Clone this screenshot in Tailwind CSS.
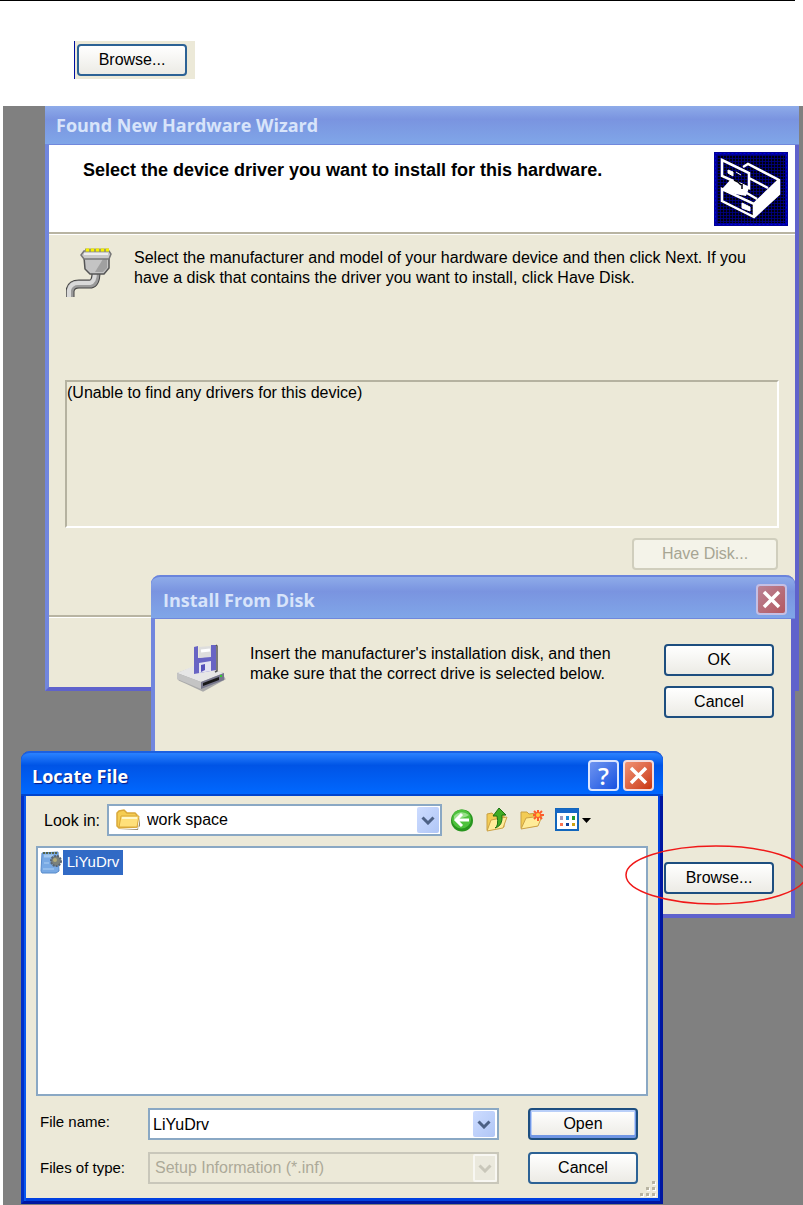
<!DOCTYPE html>
<html lang="en">
<head>
<meta charset="utf-8">
<meta name="viewport" content="width=device-width, initial-scale=1">
<title>Locate File</title>
<script src="https://cdn.jsdelivr.net/npm/@tailwindcss/browser@4"></script>
</head>
<body class="flex min-h-screen flex-col bg-white font-['Liberation_Sans',Arial,sans-serif] text-[16px] leading-5 text-black">

<div class="mr-2 h-px bg-black"></div>

<div class="mt-10 ml-[74px] flex h-[38px] w-[121px] items-center border-l border-[#0010a0] bg-[#ece9d8] pl-0.5">
  <button class="h-8 w-[110px] rounded-[4px] border-2 border-[#2c6295] bg-linear-to-b from-white to-[#ecebe5]">Browse...</button>
</div>

<main class="relative mt-[27px] ml-[3px] min-h-[1099px] grow overflow-hidden bg-[#808080]">

  <!-- Found New Hardware Wizard -->
  <section class="absolute top-0 right-1 left-[42px] flex h-[585px] flex-col border-x-4 border-b-4 border-r-[#5f62cc] border-b-[#5f62cc] border-l-[#7186de] bg-[#ece9d8]">
    <header class="-mx-1 flex h-[39px] items-center border-b border-[#7088dc] bg-linear-to-b from-[#8eabe9] via-[#7a94e0] via-35% to-[#80a6e8] pl-[11px]">
      <h2 class="font-['Open_Sans',sans-serif] text-[18px] leading-6 font-bold text-[#d8e4fa]">Found New Hardware Wizard</h2>
    </header>
    <div class="flex h-[87px] items-start justify-between bg-white pt-[7px] pr-[7px] pl-[34px]">
      <h3 class="pt-2 text-[18px] leading-5 font-bold">Select the device driver you want to install for this hardware.</h3>
      <svg class="h-[74px] w-[74px] shrink-0" viewBox="0 0 74 74">
        <defs><pattern id="mesh" width="3" height="3" patternUnits="userSpaceOnUse"><rect width="3" height="3" fill="#00000c"/><path d="M0 .5H3M.5 0V3" stroke="#000088" stroke-width=".8"/></pattern></defs>
        <rect width="74" height="74" fill="#000098"/>
        <rect x="3" y="3" width="68" height="68" fill="url(#mesh)"/>
        <rect x="1.500" y="1.500" width="71" height="71" fill="none" stroke="#0000e0" stroke-dasharray="2 2"/>
        <path d="M8 37L17 27L27 31L35 36L32 44L21 42L12 39Z" fill="#fff"/>
        <path d="M40 64L40 51L65 27V42Z" fill="#fff"/>
        <path d="M8 8L35 21V36L8 24ZM29 15L34 12L65 28V42L40 65L8 49V37L40 52L65 28M35 26L54 36M40 52V65M31 40L43 47" fill="none" stroke="#fff" stroke-width="2.500"/>
        <path d="M14 18L19 20V24L14 21ZM22 20L27 23M28 51L36 55V59L28 56Z" fill="#fff" stroke="#fff" stroke-width="1"/>
        <path d="M20 28L24 30L27 33M28 32V37" stroke="#00000c" stroke-width="1.500" fill="none"/>
      </svg>
    </div>
    <div class="h-[3px] border-t-2 border-b border-t-[#b8b4a2] border-b-white"></div>
    <div class="flex gap-5 px-[17px] pt-[13px]">
      <svg class="h-[50px] w-[48px] shrink-0" viewBox="0 0 48 50">
        <path d="M4 49V43Q5 36 13 36H25Q30 35 30 24" fill="none" stroke="#444" stroke-width="9"/>
        <path d="M4 49V43Q5 36 12 36H25Q30 35 30 24" fill="none" stroke="#9a9a9a" stroke-width="7"/>
        <path d="M3 49V42Q5 35 12 35H24Q29 34 29 24" fill="none" stroke="#d9d9d9" stroke-width="4"/>
        <path d="M18 9H43V20L38 26H24L19 21Z" fill="#c4c4c4" stroke="#555" stroke-width="1.500"/>
        <path d="M37 11H41V20L37 24H29Z" fill="#a0a0a0"/>
        <path d="M18 3H43L45 6L43 11H18L15 7Z" fill="#c9c9c9" stroke="#777" stroke-width="1.500"/>
        <path d="M18 6H42" stroke="#eee" stroke-width="2"/>
        <path d="M19 2H43" stroke="#a5a35a" stroke-width="3"/>
        <path d="M20 2H43" stroke="#f4f000" stroke-width="3" stroke-dasharray="3 2"/>
      </svg>
      <p>Select the manufacturer and model of your hardware device and then click Next. If you<br>have a disk that contains the driver you want to install, click Have Disk.</p>
    </div>
    <div class="mx-[16px] mt-[82px] h-[148px] border-2 border-t-[#b5b2a0] border-r-white border-b-white border-l-[#b5b2a0] pt-px">(Unable to find any drivers for this device)</div>
    <div class="flex justify-end pt-2.5 pr-[17px]">
      <button disabled class="h-8 w-[146px] rounded-[4px] border-2 border-[#d0cebd] bg-[#f4f3e9] text-[#a7a593]">Have Disk...</button>
    </div>
    <div class="mt-[45px] h-[3px] border-t-2 border-b border-t-[#b8b4a2] border-b-white"></div>
  </section>

  <!-- Install From Disk -->
  <section class="absolute top-[469px] right-2 left-[148px] flex h-[343px] flex-col rounded-t-[9px] border-x-4 border-b-4 border-r-[#5f62cc] border-b-[#5f62cc] border-l-[#7186de] bg-[#ece9d8]">
    <header class="-mx-1 flex h-[44px] items-center justify-between rounded-t-[9px] border-t-2 border-b border-t-[#6a84dc] border-b-[#7088dc] bg-linear-to-b from-[#8eabe9] via-[#7a94e0] via-35% to-[#80a6e8] pt-1 pr-2 pl-3">
      <h2 class="font-['Open_Sans',sans-serif] text-[18px] leading-6 font-bold text-[#d8e4fa]">Install From Disk</h2>
      <button aria-label="Close Install From Disk" class="flex size-[31px] items-center justify-center rounded-[4px] border-2 border-[#c4bfe4] bg-linear-to-br from-[#b98397] to-[#b45860]">
        <svg class="size-[19px]" viewBox="0 0 19 19"><path d="M2 2L17 17M17 2L2 17" stroke="#fff" stroke-width="3.500"/></svg>
      </button>
    </header>
    <div class="flex pt-[25px] pr-[17px] pl-[21px]">
      <svg class="h-[48px] w-[50px] shrink-0" viewBox="0 0 50 48">
        <path d="M3 35L27 46L49 34L26 45Z" fill="#777" stroke="#aaa" stroke-width="3"/>
        <path d="M1 29L20 22L48 29V36L25 45L1 35Z" fill="#aaa"/>
        <path d="M1 29L20 21L48 29L25 38Z" fill="#e6e6e6"/>
        <path d="M1 29L25 38V45L1 35Z" fill="#c4c4c4"/>
        <path d="M25 38L48 29V36L25 45Z" fill="#77778c"/>
        <path d="M27 39L43 33V36L27 42Z" fill="#181818"/><path d="M44 32H46" stroke="#3c3" stroke-width="2"/>
        <path d="M18 3L22 2V14L35 12V1L40 1V26L18 30Z" fill="#6864c4"/>
        <path d="M23 3L35 2V13L23 14Z" fill="#ddd"/><path d="M25 7L34 6" stroke="#fff" stroke-width="3"/>
        <path d="M23 19L35 17V27L23 29Z" fill="#e4e3f1"/><path d="M25 21L29 20V26L25 28Z" fill="#5550ba"/>
        <path d="M40 1L41 2V27L39 28" fill="none" stroke="#555" stroke-width="1.500"/>
      </svg>
      <p class="ml-[24px] grow whitespace-nowrap">Insert the manufacturer's installation disk, and then<br>make sure that the correct drive is selected below.</p>
      <div class="flex w-[110px] shrink-0 flex-col gap-2.5">
        <button class="h-8 rounded-[4px] border-2 border-[#1d4e7f] bg-linear-to-b from-white to-[#ecebe5]">OK</button>
        <button class="h-8 rounded-[4px] border-2 border-[#1d4e7f] bg-linear-to-b from-white to-[#ecebe5]">Cancel</button>
        <button class="mt-[134px] h-8 rounded-[4px] border-2 border-[#1d4e7f] bg-linear-to-b from-white to-[#ecebe5]">Browse...</button>
      </div>
    </div>
  </section>

  <!-- Locate File -->
  <section class="absolute top-[645px] right-[140px] left-[18px] flex h-[453px] flex-col rounded-t-[9px] border-x-[3px] border-b-[3px] border-r-[#0016a0] border-b-[#0016a0] border-l-[#0030c8] bg-[#ece9d8] px-0.5 pb-[3px] shadow-[inset_2px_0_0_#0858ee,inset_-2px_0_0_#0040e0,inset_0_-3px_0_#0040e0]">
    <header class="-mx-[5px] flex h-[45px] shrink-0 items-center justify-between rounded-t-[9px] border-t-2 border-b-2 border-t-[#1c60e0] border-b-[#0044cc] bg-linear-to-b from-[#2a82ff] via-[#0054e6] via-30% to-[#0068ff] pt-1 pr-[9px] pl-[11px]">
      <h2 class="font-['Open_Sans',sans-serif] text-[18px] leading-6 font-bold text-white [text-shadow:1px_1px_1px_#0a1883]">Locate File</h2>
      <div class="flex gap-1">
        <button aria-label="Help" class="flex size-[31px] items-center justify-center rounded-[4px] border-2 border-[#dce6ff] bg-linear-to-br from-[#6f94f0] to-[#1650e0] font-['Open_Sans',sans-serif] text-[24px] leading-7 font-semibold text-white">?</button>
        <button aria-label="Close Locate File" class="flex size-[31px] items-center justify-center rounded-[4px] border-2 border-[#f4dcdc] bg-linear-to-br from-[#f09274] to-[#c83408]">
          <svg class="size-[19px]" viewBox="0 0 19 19"><path d="M2 2L17 17M17 2L2 17" stroke="#fff" stroke-width="3.500"/></svg>
        </button>
      </div>
    </header>

    <div class="flex items-center pt-2 pl-[18px]">
      <label for="lookin" class="w-[63px] pt-0.5">Look in:</label>
      <div class="relative h-8 w-[335px]">
        <select id="lookin" class="h-8 w-full appearance-none border-2 border-[#8aa8c4] bg-white pl-[38px]"><option>work space</option></select>
        <svg class="pointer-events-none absolute top-[5px] left-[9px] h-[22px] w-[25px]" viewBox="0 0 25 22">
          <path d="M3 20H21L24 17V8L22 21Z" fill="#97886a"/>
          <path d="M1 17V4L3 2L8 1L11 4H19L21 6V18L3 19Z" fill="#f5cd52" stroke="#d9a83a" stroke-width="1.500"/>
          <path d="M3 18L5 7H23L21 18Z" fill="#ffe07a" stroke="#d9a83a"/>
          <path d="M6 9H21" stroke="#fff8cb" stroke-width="2"/>
        </svg>
        <span class="pointer-events-none absolute top-[3px] right-[3px] flex h-[26px] w-[22px] items-center justify-center rounded-[2px] bg-linear-to-br from-[#cddcff] to-[#b0c6f6]">
          <svg class="h-[9px] w-[14px]" viewBox="0 0 14 9"><path d="M1.500 1.500L7 7L12.500 1.500" fill="none" stroke="#4d6185" stroke-width="3"/></svg>
        </span>
      </div>
      <div class="ml-2 flex items-center gap-[11px]">
        <button aria-label="Back"><svg class="size-6" viewBox="0 0 24 24">
          <circle cx="12" cy="12.500" r="11" fill="#28951e"/><circle cx="11.500" cy="11" r="9.500" fill="#4fc23d"/><path d="M4 8Q11 1 19 7Q15 10 4 11Z" fill="#9ae08c"/>
          <path d="M19 12H7M12 6L6 12L12 18" fill="none" stroke="#fff" stroke-width="3"/></svg></button>
        <button aria-label="Up One Level"><svg class="size-6" viewBox="0 0 24 24">
          <path d="M2 22V6L7 5L9 7L19 5V19Z" fill="#f3cc55" stroke="#caa040"/><path d="M2 23L6 12L22 9L18 20Z" fill="#ffec99" stroke="#cca246"/>
          <path d="M10 20Q14 18 12 8H8L14 0L21 7H17Q18 18 10 20Z" fill="#40ac24" stroke="#1a7112"/></svg></button>
        <button aria-label="Create New Folder"><svg class="size-6" viewBox="0 0 24 24">
          <path d="M1 20V4L7 4L9 6L17 5V18Z" fill="#f3cc55" stroke="#caa040"/><path d="M1 21L6 10L22 8L18 18Z" fill="#ffec99" stroke="#cca246"/>
          <path d="M18 2V13M13 7H24M14 3L22 11M22 3L14 11" stroke="#fd5b2b" stroke-width="2"/><circle cx="18" cy="7" r="2" fill="#ffc93e"/></svg></button>
        <button aria-label="View Menu" class="flex items-center gap-[3px]"><svg class="size-6" viewBox="0 0 24 24">
          <rect x="1" y="1" width="22" height="21" fill="#fff" stroke="#1266bc" stroke-width="2"/><path d="M1 1H23V5H1Z" fill="#1768c6"/>
          <path d="M5 8H8V12H5Z" fill="#a39abd"/><path d="M11 8H14V12H11Z" fill="#188bd8"/><path d="M17 8H20V12H17Z" fill="#239d31"/><path d="M5 15H8V18H5Z" fill="#fa7350"/><path d="M11 15H14V18H11Z" fill="#103e96"/><path d="M17 15H20V18H17Z" fill="#cda211"/></svg>
          <svg class="h-[5px] w-[9px]" viewBox="0 0 9 5"><path d="M0 0H9L4.500 5Z"/></svg></button>
      </div>
    </div>

    <div class="mx-[10px] mt-2.5 h-[250px] border-2 border-[#8aa8c4] bg-white pt-px pl-0.5">
      <button class="flex h-[26px] items-center text-[15px]">
        <svg class="h-6 w-[23px]" viewBox="0 0 23 24">
          <path d="M2 3L18 2L19 21L16 23H2L1 21Z" fill="#78a9e4" stroke="#568acb"/><path d="M3 3H17" stroke="#55654d" stroke-width="2" stroke-dasharray="2 1"/>
          <path d="M4 6H13" stroke="#a1c7f0" stroke-width="3"/><path d="M4 13H9M3 19H14" stroke="#92bcec" stroke-width="2"/><circle cx="16" cy="11" r="5" fill="#7b817c" stroke="#596471" stroke-width="2" stroke-dasharray="2 1"/><circle cx="15" cy="10" r="2" fill="#b5ac78"/>
        </svg>
        <span class="flex h-[25px] w-[60px] items-center justify-center bg-[#316ac5] text-white">LiYuDrv</span>
      </button>
    </div>

    <div class="grid grid-cols-[108px_1fr_110px] gap-y-3 pt-3 pr-[20px] pl-[14px]">
      <label for="fname" class="pt-1 text-[15px]">File name:</label>
      <div class="mr-[29px] flex h-8 items-center border-2 border-[#8aa8c4] bg-white pr-0.5">
        <input id="fname" value="LiYuDrv" class="h-7 min-w-0 grow bg-transparent pt-0.5 pl-[3px] outline-none">
        <button aria-label="File name list" class="flex h-[26px] w-[22px] items-center justify-center rounded-[2px] bg-linear-to-br from-[#cddcff] to-[#b0c6f6]">
          <svg class="h-[9px] w-[14px]" viewBox="0 0 14 9"><path d="M1.500 1.500L7 7L12.500 1.500" fill="none" stroke="#4d6185" stroke-width="3"/></svg>
        </button>
      </div>
      <button class="h-8 rounded-[4px] border-2 border-[#1d4e7f] bg-linear-to-b from-white to-[#ecebe5] shadow-[inset_0_-2px_0_1px_#7096e4,inset_0_0_0_2px_#b9cff8]">Open</button>

      <label for="ftype" class="pt-1.5 text-[15px]">Files of type:</label>
      <div class="relative mr-[29px] h-8">
        <select id="ftype" disabled class="h-8 w-full appearance-none border-2 border-[#c9c7ba] bg-[#ece9d8] pl-[5px] text-[#aca999] opacity-100"><option>Setup Information (*.inf)</option></select>
        <span class="pointer-events-none absolute top-[2px] right-[2px] flex h-7 w-6 items-center justify-center rounded-[2px] border-2 border-[#f8f7f2] bg-[#ebe9dd]">
          <svg class="h-[9px] w-[14px]" viewBox="0 0 14 9"><path d="M1.500 1.500L7 7L12.500 1.500" fill="none" stroke="#c9c7ba" stroke-width="3"/></svg>
        </span>
      </div>
      <button class="h-8 rounded-[4px] border-2 border-[#2c6295] bg-linear-to-b from-white to-[#ecebe5]">Cancel</button>
    </div>
    <svg class="absolute right-1 bottom-1 size-[17px]" viewBox="0 0 17 17">
      <path d="M14 2h3v3h-3zM8 8h3v3h-3zM14 8h3v3h-3zM2 14h3v3h-3zM8 14h3v3h-3zM14 14h3v3h-3z" fill="#fff"/>
      <path d="M13 1h3v3h-3zM7 7h3v3h-3zM13 7h3v3h-3zM1 13h3v3h-3zM7 13h3v3h-3zM13 13h3v3h-3z" fill="#b8b4a2"/>
    </svg>
  </section>

  <!-- Red marker around Browse -->
  <svg class="pointer-events-none absolute top-[739px] -right-1 h-[61px] w-[182px]" viewBox="0 0 182 61"><ellipse cx="91" cy="30" rx="90" ry="29" fill="none" stroke="#f01818" stroke-width="1.500"/></svg>
</main>
</body>
</html>
